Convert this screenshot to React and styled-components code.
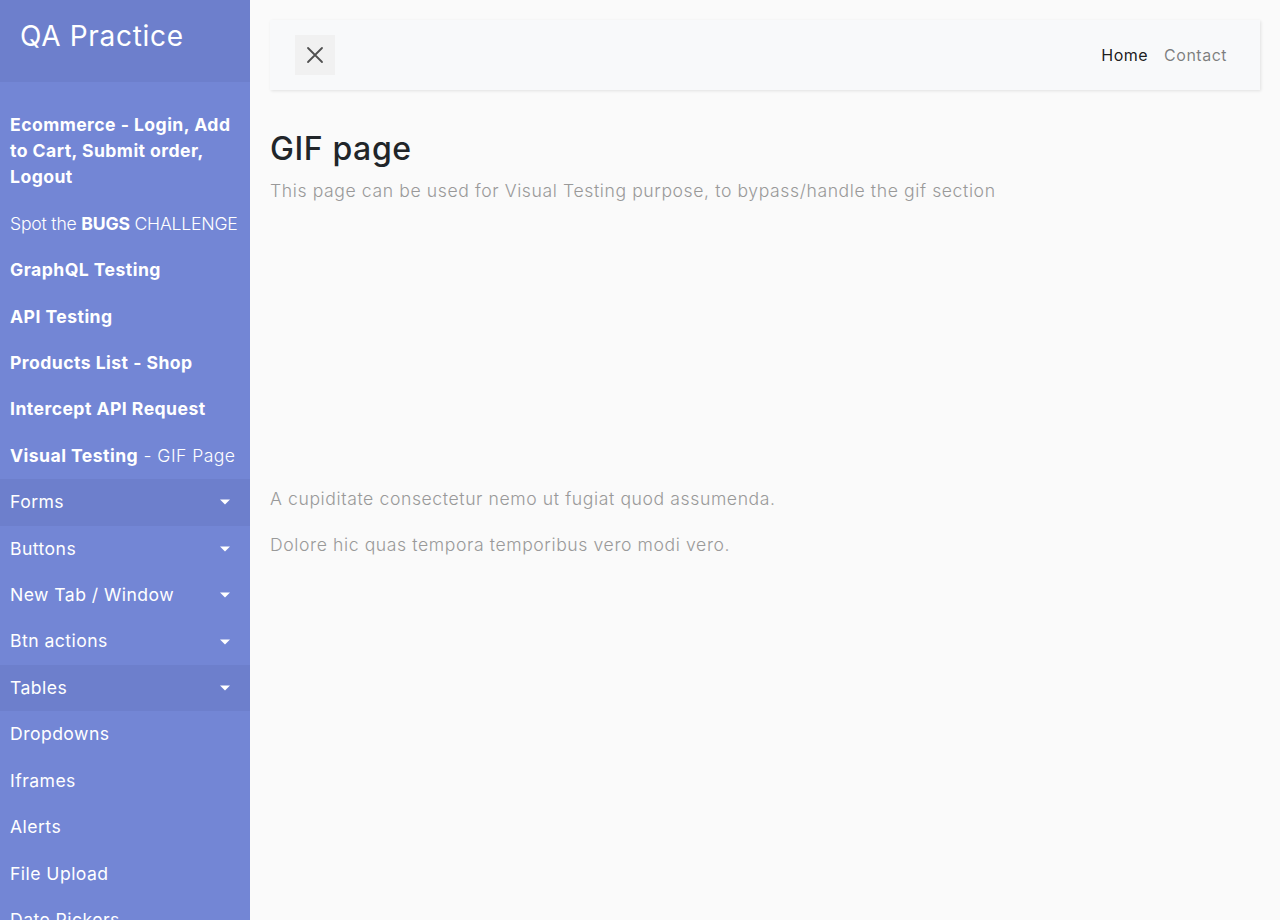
import React from "react"
import styled, { createGlobalStyle } from "styled-components"

const GlobalStyle = createGlobalStyle`
  html, body {
    margin: 0;
    padding: 0;
    height: 100%;
    overflow: hidden;
  }
  body {
    font-family: Inter, "Open Sans", sans-serif;
    background: #fafafa;
    color: #212529;
  }
  * {
    box-sizing: border-box;
  }
`

const links = [
  { label: "Ecommerce - Login, Add to Cart, Submit order, Logout", bold: true },
  { label: "Spot the", strong: "BUGS", rest: " CHALLENGE", tight: true },
  { label: "GraphQL Testing", bold: true },
  { label: "API Testing", bold: true },
  { label: "Products List - Shop", bold: true },
  { label: "Intercept API Request", bold: true },
  { strong: "Visual Testing", rest: " - GIF Page" },
  { label: "Forms", dropdown: true, active: true },
  { label: "Buttons", dropdown: true },
  { label: "New Tab / Window", dropdown: true },
  { label: "Btn actions", dropdown: true },
  { label: "Tables", dropdown: true, active: true },
  { label: "Dropdowns" },
  { label: "Iframes" },
  { label: "Alerts" },
  { label: "File Upload" },
  { label: "Date Pickers" }
]

export default function App() {
  return (
    <Wrapper>
      <GlobalStyle />
      <Sidebar>
        <SidebarHeader>
          <Brand>QA Practice</Brand>
        </SidebarHeader>
        <Menu>
          {links.map((l, i) => (
            <li key={i}>
              <MenuLink
                href="#"
                $bold={l.bold}
                $active={l.active}
                $dropdown={l.dropdown}
                $tight={l.tight}
              >
                {l.label && !l.strong && l.label}
                {l.strong && (
                  <>
                    {l.label && <Light>{l.label} </Light>}
                    <b>{l.strong}</b>
                    <Light>{l.rest}</Light>
                  </>
                )}
              </MenuLink>
            </li>
          ))}
        </Menu>
      </Sidebar>
      <Content>
        <Navbar>
          <ToggleButton aria-label="close">
            <svg width="20" height="20" viewBox="0 0 20 20">
              <path
                d="M3 3 L17 17 M17 3 L3 17"
                stroke="#505050"
                strokeWidth="1.8"
                strokeLinecap="round"
              />
            </svg>
          </ToggleButton>
          <NavLinks>
            <NavItem href="#" $active>Home</NavItem>
            <NavItem href="#">Contact</NavItem>
          </NavLinks>
        </Navbar>
        <Title>GIF page</Title>
        <Text>
          This page can be used for Visual Testing purpose, to bypass/handle the gif section
        </Text>
        <GifSlot />
        <Text>A cupiditate consectetur nemo ut fugiat quod assumenda.</Text>
        <Text>Dolore hic quas tempora temporibus vero modi vero.</Text>
      </Content>
    </Wrapper>
  )
}

const Wrapper = styled.div`
  display: flex;
  height: 100vh;
  overflow: hidden;
`

const Sidebar = styled.nav`
  width: 250px;
  flex: 0 0 250px;
  background: #7386d5;
  color: #fff;
  height: 100vh;
  overflow: hidden;
`

const SidebarHeader = styled.div`
  padding: 20px;
  background: #6d7fcc;
`

const Brand = styled.h3`
  margin: 0 0 8px;
  font-size: 28px;
  font-weight: 400;
  line-height: 1.2;
  letter-spacing: 0.7px;
`

const Menu = styled.ul`
  list-style: none;
  margin: 0;
  padding: 20px 0;
`

const MenuLink = styled.a`
  position: relative;
  display: block;
  padding: 10px;
  font-size: 17.6px;
  line-height: 26.4px;
  letter-spacing: ${p => (p.$tight ? "-0.2px" : "0.45px")};
  white-space: ${p => (p.$tight ? "nowrap" : "normal")};
  color: #fff;
  text-decoration: none;
  font-weight: ${p => (p.$bold ? 700 : 400)};
  background: ${p => (p.$active ? "#6d7fcc" : "transparent")};

  b {
    font-weight: 700;
  }

  &::after {
    content: "";
    display: ${p => (p.$dropdown ? "block" : "none")};
    position: absolute;
    right: 20px;
    top: 50%;
    transform: translateY(-50%);
    border-top: 5.3px solid #fff;
    border-left: 5.3px solid transparent;
    border-right: 5.3px solid transparent;
  }
`

const Light = styled.span`
  font-weight: 300;
`

const Content = styled.main`
  flex: 1;
  padding: 20px;
  min-height: 100vh;
`

const Navbar = styled.div`
  display: flex;
  align-items: center;
  justify-content: space-between;
  padding: 15px 25px;
  background: #f8f9fa;
  box-shadow: 1px 1px 3px rgba(0, 0, 0, 0.1);
  margin-bottom: 40px;
`

const ToggleButton = styled.button`
  width: 40px;
  height: 40px;
  border: none;
  padding: 0;
  background: #f1f1f1;
  display: flex;
  align-items: center;
  justify-content: center;
`

const NavLinks = styled.div`
  display: flex;
`

const NavItem = styled.a`
  padding: 8px;
  font-size: 16px;
  line-height: 24px;
  font-weight: 400;
  letter-spacing: 0.5px;
  text-decoration: none;
  color: ${p => (p.$active ? "rgba(0,0,0,0.9)" : "rgba(0,0,0,0.5)")};
`

const Title = styled.h2`
  margin: 0 0 8px;
  font-size: 32px;
  line-height: 1.2;
  font-weight: 500;
  letter-spacing: 0.6px;
  color: #212529;
`

const Text = styled.p`
  margin: 0 0 16px;
  font-size: 17.6px;
  line-height: 1.7;
  font-weight: 300;
  letter-spacing: 0.6px;
  color: #999;
`

const GifSlot = styled.div`
  height: 262px;
`
